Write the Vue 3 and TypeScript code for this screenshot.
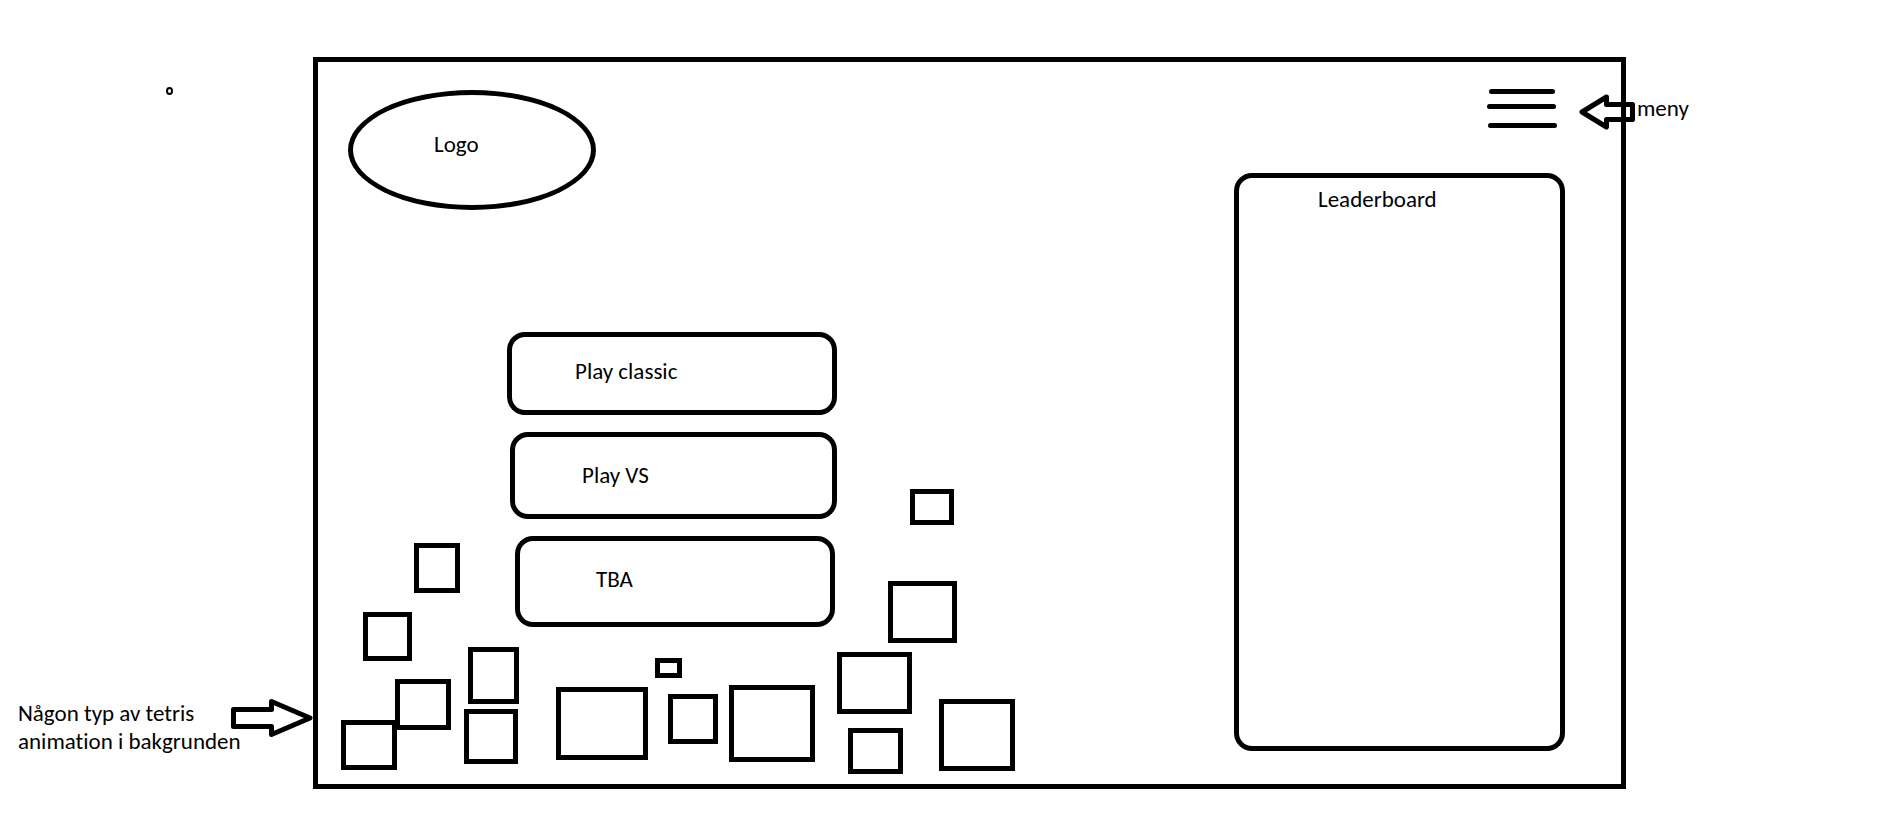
<script setup lang="ts">
interface Block {
  x: number
  y: number
  w: number
  h: number
}

interface Mode {
  label: string
  size: string
}

const modes: Mode[] = [
  { label: 'Play classic', size: 'large' },
  { label: 'Play VS', size: 'medium' },
  { label: 'TBA', size: 'small' },
]

// Falling blocks, measured from the inner top left corner of the frame.
const blocks: Block[] = [
  { x: 96, y: 481, w: 46, h: 50 },
  { x: 45, y: 550, w: 49, h: 49 },
  { x: 150, y: 585, w: 51, h: 57 },
  { x: 77, y: 617, w: 56, h: 51 },
  { x: 23, y: 658, w: 56, h: 50 },
  { x: 146, y: 647, w: 54, h: 55 },
  { x: 238, y: 625, w: 92, h: 73 },
  { x: 337, y: 596, w: 27, h: 20 },
  { x: 350, y: 632, w: 50, h: 50 },
  { x: 411, y: 623, w: 86, h: 77 },
  { x: 519, y: 590, w: 75, h: 62 },
  { x: 530, y: 666, w: 55, h: 46 },
  { x: 570, y: 519, w: 69, h: 62 },
  { x: 592, y: 427, w: 44, h: 36 },
  { x: 621, y: 637, w: 76, h: 72 },
]

function place(b: Block) {
  return { left: `${b.x}px`, top: `${b.y}px`, width: `${b.w}px`, height: `${b.h}px` }
}
</script>

<template>
  <div class="page">
    <aside class="side side-left">
      <span class="dot"></span>
      <div class="note">
        <p>Någon typ av tetris<br />animation i bakgrunden</p>
        <svg class="arrow arrow-right" width="82" height="38" viewBox="0 0 82 38" aria-hidden="true">
          <path d="M2.5 10.5H40.5V2.5L79 19L40.5 35.5V27.5H2.5Z" />
        </svg>
      </div>
    </aside>

    <main class="frame">
      <div class="blocks" aria-hidden="true">
        <span v-for="(b, i) in blocks" :key="i" class="block" :style="place(b)"></span>
      </div>

      <section class="primary">
        <div class="logo">Logo</div>
        <nav class="modes">
          <button v-for="m in modes" :key="m.label" type="button" class="mode" :class="m.size">
            {{ m.label }}
          </button>
        </nav>
      </section>

      <section class="secondary">
        <button type="button" class="menu" aria-label="meny">
          <svg width="70" height="39" viewBox="0 0 70 39" aria-hidden="true">
            <path d="M4.5 2.5H65.5M2.5 17.5H66.5M3.5 36.5H67.5" />
          </svg>
        </button>
        <div class="board">
          <h2>Leaderboard</h2>
        </div>
      </section>
    </main>

    <aside class="side side-right">
      <svg class="arrow arrow-left" width="56" height="36" viewBox="0 0 56 36" aria-hidden="true">
        <path d="M53.5 10.5H27.5V3L3 18L27.5 33V25.5H53.5Z" />
      </svg>
      <p>meny</p>
    </aside>
  </div>
</template>

<style>
body {
  margin: 0;
  background: #fff;
}
</style>

<style scoped>
.page {
  display: grid;
  grid-template-columns: 313fr 1313fr 258fr;
  padding-top: 57px;
  color: #000;
  font-family: Calibri, Carlito, Lato, sans-serif;
  font-size: 23px;
  font-variant-ligatures: none;
  line-height: 28px;
}

p,
h2 {
  margin: 0;
  font: inherit;
}

button {
  box-sizing: border-box;
  margin: 0;
  background: none;
  color: inherit;
  font: inherit;
  cursor: pointer;
}

.side {
  position: relative;
}

.side-left {
  display: flex;
  flex-direction: column;
  justify-content: space-between;
  padding: 30px 0 34px 18px;
}

.dot {
  box-sizing: border-box;
  width: 7px;
  height: 8px;
  margin-left: 148px;
  border: 2px solid #000;
  border-radius: 50%;
}

.note {
  position: relative;
  white-space: nowrap;
}

.side-right {
  padding: 37px 0 0 11px;
}

.arrow {
  position: absolute;
  fill: none;
  stroke: #000;
  stroke-width: 5px;
  stroke-linejoin: round;
}

.arrow-right {
  top: 0;
  right: 0;
}

.arrow-left {
  top: 37px;
  left: -47px;
}

.frame {
  position: relative;
  display: flex;
  justify-content: space-between;
  padding: 27px 56px 33px 30px;
  border: 5px solid #000;
}

.blocks {
  position: absolute;
  inset: 0;
}

.block {
  position: absolute;
  box-sizing: border-box;
  border: 5px solid #000;
}

.primary,
.secondary {
  position: relative;
  display: flex;
  flex-direction: column;
}

.logo {
  box-sizing: border-box;
  display: flex;
  align-items: center;
  width: 248px;
  height: 120px;
  margin-top: 1px;
  padding: 0 0 12px 81px;
  border: 5px solid #000;
  border-radius: 50%;
}

.modes {
  display: flex;
  flex-direction: column;
  gap: 17px;
  margin: 122px 0 0 159px;
}

.mode {
  padding: 0 0 6px 63px;
  border: 5px solid #000;
  border-radius: 18px;
  text-align: left;
}

.large {
  width: 330px;
  height: 83px;
}

.medium {
  width: 327px;
  height: 87px;
  margin-left: 3px;
  padding: 0 0 2px 67px;
}

.small {
  width: 320px;
  height: 91px;
  margin-left: 8px;
  padding-left: 76px;
}

.secondary {
  width: 331px;
}

.menu {
  align-self: flex-end;
  height: 39px;
  margin-right: 8px;
  padding: 0;
  border: 0;
}

.menu svg {
  display: block;
  fill: none;
  stroke: #000;
  stroke-width: 5px;
  stroke-linecap: round;
}

.board {
  box-sizing: border-box;
  min-height: 578px;
  margin-top: 45px;
  padding: 7px 20px 20px 79px;
  border: 5px solid #000;
  border-radius: 18px;
}
</style>
